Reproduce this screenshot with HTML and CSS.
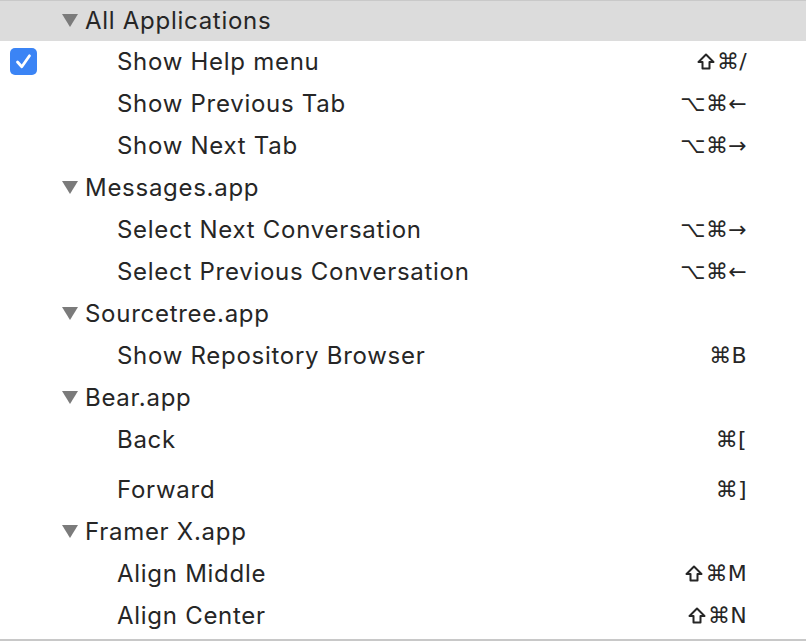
FILE: index.html
```html
<!DOCTYPE html>
<html>
<head>
<meta charset="utf-8">
<link rel="stylesheet" href="styles.css">
</head>
<body>
<div class="list">
  <div class="row group header"><span class="tri"></span><span class="name">All Applications</span></div>
  <div class="row item"><span class="check"><svg viewBox="0 0 27 27" width="27" height="27"><rect x="0" y="0" width="27" height="27" rx="5" fill="#3b84f5"/><path d="M7.5 14 L11.8 18.8 L19.5 7.8" fill="none" stroke="#fff" stroke-width="2.8" stroke-linecap="round" stroke-linejoin="round"/></svg></span><span class="name">Show Help menu</span><span class="key"><svg class="shift" viewBox="0 0 18 17" width="18" height="17"><path d="M9 1.5 L16.5 9 H12.5 V15.5 H5.5 V9 H1.5 Z" fill="none" stroke="#262626" stroke-width="2" stroke-linejoin="round"/></svg>⌘/</span></div>
  <div class="row item"><span class="check"></span><span class="name">Show Previous Tab</span><span class="key">⌥⌘←</span></div>
  <div class="row item"><span class="check"></span><span class="name">Show Next Tab</span><span class="key">⌥⌘→</span></div>
  <div class="row group"><span class="tri"></span><span class="name">Messages.app</span></div>
  <div class="row item"><span class="check"></span><span class="name">Select Next Conversation</span><span class="key">⌥⌘→</span></div>
  <div class="row item"><span class="check"></span><span class="name">Select Previous Conversation</span><span class="key">⌥⌘←</span></div>
  <div class="row group"><span class="tri"></span><span class="name">Sourcetree.app</span></div>
  <div class="row item"><span class="check"></span><span class="name">Show Repository Browser</span><span class="key">⌘B</span></div>
  <div class="row group"><span class="tri"></span><span class="name">Bear.app</span></div>
  <div class="row item tall"><span class="check"></span><span class="name">Back</span><span class="key">⌘[</span></div>
  <div class="row item"><span class="check"></span><span class="name">Forward</span><span class="key">⌘]</span></div>
  <div class="row group"><span class="tri"></span><span class="name">Framer X.app</span></div>
  <div class="row item"><span class="check"></span><span class="name">Align Middle</span><span class="key"><svg class="shift" viewBox="0 0 18 17" width="18" height="17"><path d="M9 1.5 L16.5 9 H12.5 V15.5 H5.5 V9 H1.5 Z" fill="none" stroke="#262626" stroke-width="2" stroke-linejoin="round"/></svg>⌘M</span></div>
  <div class="row item"><span class="check"></span><span class="name">Align Center</span><span class="key"><svg class="shift" viewBox="0 0 18 17" width="18" height="17"><path d="M9 1.5 L16.5 9 H12.5 V15.5 H5.5 V9 H1.5 Z" fill="none" stroke="#262626" stroke-width="2" stroke-linejoin="round"/></svg>⌘N</span></div>
</div>
</body>
</html>
```
FILE: styles.css
```css
html, body {
  margin: 0;
  padding: 0;
  background: #ffffff;
}
body {
  font-family: "Inter", "Liberation Sans", sans-serif;
  color: #262626;
}
.list {
  width: 806px;
  height: 641px;
  border-top: 1px solid #c9c9c9;
  border-bottom: 2px solid #c8c8c8;
  box-sizing: border-box;
  display: flex;
  flex-direction: column;
}
.row {
  display: flex;
  align-items: center;
  height: 42px;
  flex: none;
  padding-right: 59px;
  padding-bottom: 2px;
  box-sizing: border-box;
  font-size: 24px;
  letter-spacing: 0.72px;
}
.header {
  background: #dcdcdc;
  height: 40px;
}
.group {
  padding-left: 62px;
}
.tri {
  width: 0;
  height: 0;
  border-left: 8px solid transparent;
  border-right: 8px solid transparent;
  border-top: 13px solid #7b7b7b;
  margin-right: 7px;
}
.item {
  padding-left: 0;
}
.check {
  width: 117px;
  flex: none;
  display: flex;
  align-items: center;
  padding-left: 10px;
  box-sizing: border-box;
}
.check svg {
  display: block;
}
.name {
  flex: 1;
  white-space: nowrap;
}
.key {
  font-family: "DejaVu Sans", sans-serif;
  font-size: 22px;
  letter-spacing: 0.3px;
  display: flex;
  align-items: center;
}
.shift {
  display: block;
  margin-right: 2px;
}
.tall {
  height: 50px;
  padding-bottom: 10px;
}
```
